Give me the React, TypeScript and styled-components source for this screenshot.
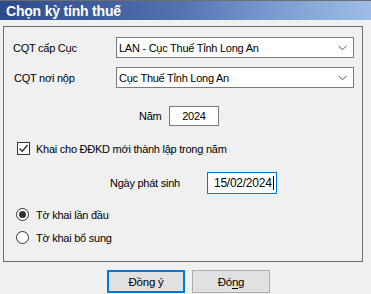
import React from "react";
import styled, { createGlobalStyle } from "styled-components";

const GlobalStyle = createGlobalStyle`
  html, body {
    margin: 0;
    padding: 0;
    background: #f0f0f0;
  }
  body {
    font-family: "Liberation Sans", Arial, sans-serif;
    font-size: 11px;
    letter-spacing: -0.25px;
    color: #000;
  }
`;

const Window = styled.div`
  width: 371px;
  height: 294px;
  background: #f0f0f0;
  display: flex;
  flex-direction: column;
  overflow: hidden;
`;

const TitleBar = styled.div`
  height: 19px;
  border-top: 1px solid #6e6e6e;
  background: linear-gradient(to right, #2d4a8e 0%, #4e6eac 45%, #7c9dd2 75%, #9dbde6 100%);
  display: flex;
  align-items: center;
  padding-left: 6px;
  color: #fff;
  font-weight: bold;
  font-size: 14px;
  letter-spacing: -0.2px;
`;

const GroupBox = styled.div`
  margin: 6px 0 0 3px;
  width: 358px;
  height: 234px;
  border: 1px solid #6d6d6d;
`;

const Row = styled.div<{ $top: number; $left?: number }>`
  display: flex;
  align-items: center;
  margin-top: ${(p) => p.$top}px;
  margin-left: ${(p) => p.$left ?? 0}px;
`;

const Label = styled.span<{ $width?: number }>`
  display: inline-block;
  width: ${(p) => (p.$width ? `${p.$width}px` : "auto")};
  white-space: nowrap;
`;

const Combo = styled.div`
  box-sizing: border-box;
  width: 238px;
  height: 21px;
  border: 1px solid #7a7a7a;
  background: #fff;
  display: flex;
  align-items: center;
  padding-left: 2px;
  padding-right: 6px;
`;

const ComboText = styled.span`
  flex: 1;
  white-space: nowrap;
`;

const TextBox = styled.div<{ $width: number; $height: number; $focused?: boolean; $center?: boolean }>`
  box-sizing: border-box;
  width: ${(p) => p.$width}px;
  height: ${(p) => p.$height}px;
  border: 1px solid ${(p) => (p.$focused ? "#0078d7" : "#7a7a7a")};
  background: #fff;
  display: flex;
  align-items: center;
  justify-content: ${(p) => (p.$center ? "center" : "flex-start")};
  padding-left: ${(p) => (p.$center ? 0 : 6)}px;
  font-size: ${(p) => (p.$focused ? 12 : 11)}px;
`;

const Caret = styled.span`
  display: inline-block;
  width: 1px;
  height: 14px;
  background: #000;
  margin-left: 1px;
`;

const CheckBox = styled.span`
  box-sizing: border-box;
  width: 13px;
  height: 13px;
  border: 1px solid #333;
  background: #fff;
  display: inline-flex;
  align-items: center;
  justify-content: center;
  margin-right: 6px;
`;

const Radio = styled.span<{ $checked?: boolean }>`
  box-sizing: border-box;
  width: 13px;
  height: 13px;
  border: 1px solid #333;
  border-radius: 50%;
  background: #fff;
  display: inline-flex;
  align-items: center;
  justify-content: center;
  margin-right: 7px;
  &::after {
    content: "";
    width: 7px;
    height: 7px;
    border-radius: 50%;
    background: ${(p) => (p.$checked ? "#333" : "transparent")};
  }
`;

const ButtonBar = styled.div`
  display: flex;
  gap: 7px;
  margin: 8px 0 0 107px;
`;

const Button = styled.div<{ $default?: boolean }>`
  box-sizing: border-box;
  width: 78px;
  height: 23px;
  background: #e1e1e1;
  border: ${(p) => (p.$default ? "2px solid #0078d7" : "1px solid #adadad")};
  display: flex;
  align-items: center;
  justify-content: center;
  font-size: 11.5px;
  u {
    text-decoration-thickness: 1px;
    text-underline-offset: 2px;
  }
`;

const Chevron = () => (
  <svg width="9" height="6" viewBox="0 0 9 6">
    <polyline points="0.5,0.8 4.5,4.8 8.5,0.8" fill="none" stroke="#555" strokeWidth="1" />
  </svg>
);

const Check = () => (
  <svg width="11" height="11" viewBox="0 0 11 11">
    <polyline points="1.5,5.5 4.2,8.3 9.5,2" fill="none" stroke="#222" strokeWidth="1.3" />
  </svg>
);

export default function App() {
  return (
    <>
      <GlobalStyle />
      <Window>
        <TitleBar>Chọn kỳ tính thuế</TitleBar>
        <GroupBox>
          <Row $top={10} $left={9}>
            <Label $width={103}>CQT cấp Cục</Label>
            <Combo>
              <ComboText>LAN - Cục Thuế Tỉnh Long An</ComboText>
              <Chevron />
            </Combo>
          </Row>
          <Row $top={9} $left={10}>
            <Label $width={102}>CQT nơi nộp</Label>
            <Combo>
              <ComboText>Cục Thuế Tỉnh Long An</ComboText>
              <Chevron />
            </Combo>
          </Row>
          <Row $top={18} $left={135}>
            <Label $width={30}>Năm</Label>
            <TextBox $width={50} $height={20} $center>
              2024
            </TextBox>
          </Row>
          <Row $top={16} $left={13}>
            <CheckBox>
              <Check />
            </CheckBox>
            <Label>Khai cho ĐĐKD mới thành lập trong năm</Label>
          </Row>
          <Row $top={17} $left={106}>
            <Label $width={97}>Ngày phát sinh</Label>
            <TextBox $width={70} $height={22} $focused>
              15/02/2024
              <Caret />
            </TextBox>
          </Row>
          <Row $top={14} $left={12}>
            <Radio $checked />
            <Label>Tờ khai lần đầu</Label>
          </Row>
          <Row $top={10} $left={12}>
            <Radio />
            <Label>Tờ khai bổ sung</Label>
          </Row>
        </GroupBox>
        <ButtonBar>
          <Button $default>
            <span>
              Đồn<u>g</u> ý
            </span>
          </Button>
          <Button>
            <span>
              Đó<u>n</u>g
            </span>
          </Button>
        </ButtonBar>
      </Window>
    </>
  );
}
